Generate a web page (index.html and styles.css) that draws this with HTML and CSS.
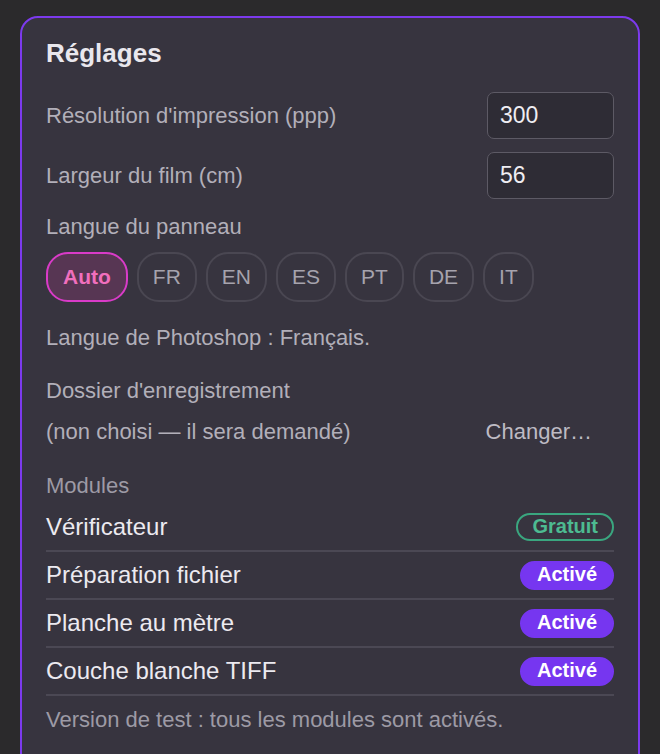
FILE: index.html
```html
<!DOCTYPE html>
<html lang="fr">
<head>
<meta charset="utf-8">
<title>Réglages</title>
<link rel="stylesheet" href="styles.css">
</head>
<body>
<div class="card">
  <h1 class="title">Réglages</h1>

  <div class="field field-first">
    <span class="label">Résolution d'impression (ppp)</span>
    <input class="num" type="text" value="300">
  </div>
  <div class="field">
    <span class="label">Largeur du film (cm)</span>
    <input class="num" type="text" value="56">
  </div>

  <div class="label lang-title">Langue du panneau</div>
  <div class="pills">
    <button class="pill pill-active">Auto</button>
    <button class="pill">FR</button>
    <button class="pill">EN</button>
    <button class="pill">ES</button>
    <button class="pill">PT</button>
    <button class="pill">DE</button>
    <button class="pill">IT</button>
  </div>
  <p class="label note">Langue de Photoshop : Français.</p>

  <div class="label folder-title">Dossier d'enregistrement</div>
  <div class="folder-row">
    <span class="label">(non choisi — il sera demandé)</span>
    <button class="link-btn">Changer…</button>
  </div>

  <div class="muted modules-title">Modules</div>
  <ul class="modules">
    <li class="module"><span class="module-name">Vérificateur</span><span class="badge badge-free">Gratuit</span></li>
    <li class="module"><span class="module-name">Préparation fichier</span><span class="badge badge-on">Activé</span></li>
    <li class="module"><span class="module-name">Planche au mètre</span><span class="badge badge-on">Activé</span></li>
    <li class="module"><span class="module-name">Couche blanche TIFF</span><span class="badge badge-on">Activé</span></li>
  </ul>
  <p class="muted footnote">Version de test : tous les modules sont activés.</p>
</div>
</body>
</html>
```

FILE: styles.css
```css
html, body {
  margin: 0;
  padding: 0;
  background: #2b2a2c;
}

body {
  font-family: "Liberation Sans", Arial, sans-serif;
  padding: 16px 20px 0;
}

.card {
  border: 2px solid #7c3aed;
  border-radius: 18px;
  background: #37343f;
  padding: 20px 24px 40px;
  display: flex;
  flex-direction: column;
}

.title {
  margin: 0;
  font-size: 26px;
  line-height: 30px;
  font-weight: 700;
  color: #e9e7ed;
}

.label {
  font-size: 22px;
  line-height: 26px;
  color: #b2afb9;
}

.muted {
  font-size: 22px;
  line-height: 26px;
  color: #9d9aa5;
}

.field {
  display: flex;
  align-items: center;
  justify-content: space-between;
  margin-top: 13px;
}

.field-first {
  margin-top: 24px;
}

.num {
  box-sizing: border-box;
  width: 127px;
  height: 47px;
  margin: 0;
  padding: 0 12px;
  border: 1.5px solid #5d5a65;
  border-radius: 7px;
  background: #2e2c35;
  color: #efedf2;
  font-family: "Liberation Sans", Arial, sans-serif;
  font-size: 23px;
  outline: none;
}

.lang-title {
  margin-top: 15px;
}

.pills {
  display: flex;
  gap: 9px;
  margin-top: 12px;
}

.pill {
  margin: 0;
  padding: 11px 14px;
  border: 2px solid #4a4752;
  border-radius: 22px;
  background: transparent;
  color: #a6a3ad;
  font-family: "Liberation Sans", Arial, sans-serif;
  font-size: 21px;
  line-height: 24px;
}

.pill-active {
  padding: 11px 15px;
  border-color: #d93bc8;
  background: #573653;
  color: #f06fbd;
  font-weight: 700;
}

.note {
  margin: 23px 0 0;
}

.folder-title {
  margin-top: 27px;
}

.folder-row {
  display: flex;
  align-items: center;
  justify-content: space-between;
  margin-top: 7px;
}

.link-btn {
  margin: 0;
  padding: 8px 22px 8px 14px;
  border: none;
  background: transparent;
  color: #bebbc4;
  font-family: "Liberation Sans", Arial, sans-serif;
  font-size: 22px;
  line-height: 26px;
}

.modules-title {
  margin-top: 20px;
}

.modules {
  list-style: none;
  margin: 5px 0 0;
  padding: 0;
}

.module {
  display: flex;
  align-items: center;
  justify-content: space-between;
  height: 46px;
  border-bottom: 2px solid #4b4854;
}

.module-name {
  font-size: 24px;
  line-height: 46px;
  color: #eceaf0;
}

.badge {
  box-sizing: border-box;
  height: 29px;
  padding: 0 14px;
  border: 2px solid transparent;
  border-radius: 15px;
  font-size: 20px;
  line-height: 23px;
  font-weight: 700;
}

.badge-free {
  border-color: #3aa67f;
  color: #4dbb91;
  height: 28px;
}

.badge-on {
  border-color: #7636f0;
  background: #7636f0;
  color: #ffffff;
  padding: 0 15px;
}

.footnote {
  margin: 11px 0 0;
}
```
